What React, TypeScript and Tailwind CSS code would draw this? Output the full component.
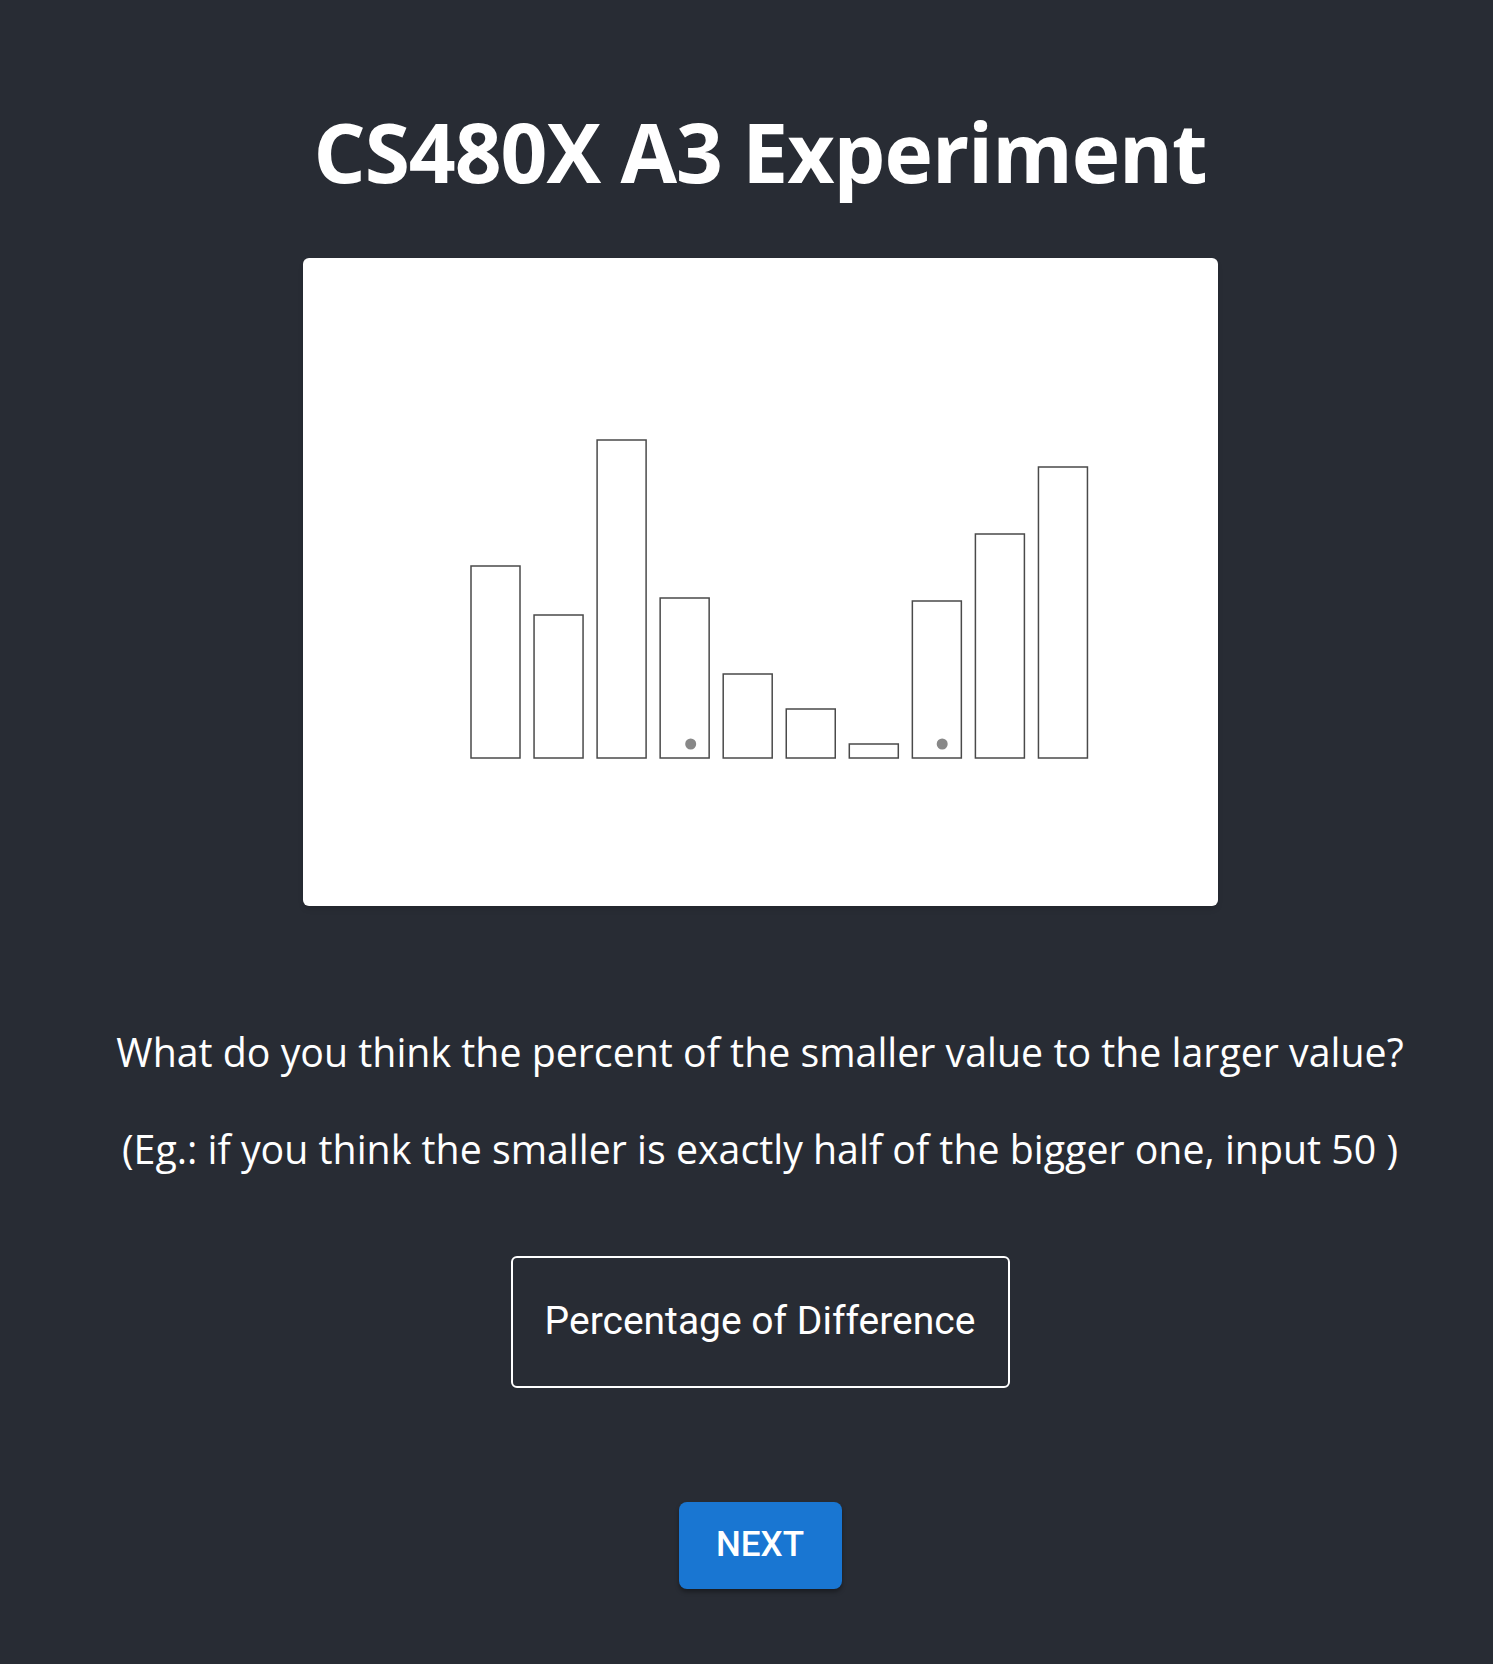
const BARS = [192, 143, 318, 160, 84, 49, 14, 157, 224, 291]

function BarChart() {
  const left = 168
  const step = 63.05
  const width = 49
  const bottom = 500
  return (
    <svg width="915" height="648" viewBox="0 0 915 648">
      {BARS.map((h, i) => (
        <rect
          key={i}
          x={left + i * step}
          y={bottom - h}
          width={width}
          height={h}
          fill="none"
          stroke="#4a4a4a"
          strokeWidth="1.5"
        />
      ))}
      <circle cx={387.7} cy={486} r={5.5} fill="#888" />
      <circle cx={639.2} cy={486} r={5.5} fill="#888" />
    </svg>
  )
}

export default function App() {
  return (
    <div className="min-h-screen bg-[#282c34] pl-[27px] flex flex-col items-center text-white font-['Open_Sans',sans-serif]">
      <h1 className="mt-[110px] text-[82px] font-bold leading-none tracking-[-1px]">CS480X A3 Experiment</h1>

      {/* chart card */}
      <div className="mt-[66px] w-[915px] h-[648px] bg-white rounded-md shadow-md">
        <BarChart />
      </div>

      <p className="mt-[127px] text-[39.3px] leading-none">What do you think the percent of the smaller value to the larger value?</p>
      <p className="mt-[58px] text-[39.3px] leading-none">(Eg.: if you think the smaller is exactly half of the bigger one, input 50 )</p>

      <div className="mt-[86px] w-[499px] h-[132px] border-2 border-white rounded-[6px] flex items-center justify-center font-['Roboto',sans-serif] text-[39px]">
        Percentage of Difference
      </div>

      <button className="mt-[114px] w-[163px] h-[87px] bg-[#1976d2] rounded-[8px] shadow-[0_3px_4px_rgba(0,0,0,0.35)] font-['Roboto',sans-serif] text-[35px] font-medium">
        NEXT
      </button>
    </div>
  )
}
